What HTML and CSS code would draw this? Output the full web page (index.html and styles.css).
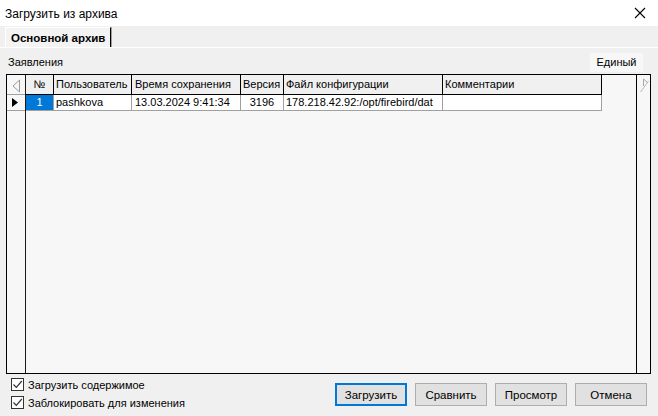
FILE: index.html
```html
<!DOCTYPE html>
<html lang="ru">
<head>
    <meta charset="UTF-8">
    <title>Загрузить из архива</title>
    <link rel="stylesheet" href="styles.css">
</head>
<body>
    <div class="window">
        <div class="titlebar">
            <span class="title">Загрузить из архива</span>
            <svg class="close" width="12" height="12" viewBox="0 0 12 12">
                <path d="M1 1 L11 11 M11 1 L1 11" stroke="#000" stroke-width="1.1" fill="none"/>
            </svg>
        </div>

        <div class="tabs">
            <div class="tab active">Основной архив</div>
        </div>

        <div class="panel">
            <div class="panel-head">
                <span class="label">Заявления</span>
                <div class="flat-btn">Единый</div>
            </div>

            <div class="grid">
                <div class="indicator">
                    <div class="ind-head">
                        <svg width="10" height="14" viewBox="0 0 10 14">
                            <path d="M8.5 1 L2 7 L8.5 13" stroke="#9a9a9a" fill="none"/>
                            <path d="M8.5 1 L8.5 13" stroke="#9a9a9a"/>
                        </svg>
                    </div>
                    <div class="ind-row">
                        <svg width="6" height="9" viewBox="0 0 6 9">
                            <path d="M0 0 L6 4.5 L0 9 Z" fill="#000"/>
                        </svg>
                    </div>
                </div>

                <div class="main">
                    <div class="row head">
                        <div class="cell c-num center">№</div>
                        <div class="cell c-user">Пользователь</div>
                        <div class="cell c-time">Время сохранения</div>
                        <div class="cell c-ver">Версия</div>
                        <div class="cell c-file">Файл конфигурации</div>
                        <div class="cell c-note">Комментарии</div>
                    </div>
                    <div class="row data">
                        <div class="cell c-num center selected">1</div>
                        <div class="cell c-user">pashkova</div>
                        <div class="cell c-time">13.03.2024 9:41:34</div>
                        <div class="cell c-ver center">3196</div>
                        <div class="cell c-file">178.218.42.92:/opt/firebird/dat</div>
                        <div class="cell c-note"></div>
                    </div>
                </div>

                <div class="side">
                    <svg width="10" height="16" viewBox="0 0 10 16">
                        <path d="M4.5 1 L4.5 8" stroke="#a8a8a8"/>
                        <path d="M4.5 1 L9 5" stroke="#a8a8a8"/>
                        <path d="M1.5 14 L9.5 3" stroke="#b8b8b8"/>
                    </svg>
                </div>
            </div>

            <div class="footer">
                <div class="checks">
                    <label class="check">
                        <span class="box">
                            <svg width="11" height="11" viewBox="0 0 11 11">
                                <path d="M1.5 5.5 L4.3 8.3 L9.8 2" stroke="#333" stroke-width="1.2" fill="none"/>
                            </svg>
                        </span>
                        Загрузить содержимое
                    </label>
                    <label class="check">
                        <span class="box">
                            <svg width="11" height="11" viewBox="0 0 11 11">
                                <path d="M1.5 5.5 L4.3 8.3 L9.8 2" stroke="#333" stroke-width="1.2" fill="none"/>
                            </svg>
                        </span>
                        Заблокировать для изменения
                    </label>
                </div>
                <div class="buttons">
                    <button class="btn default">Загрузить</button>
                    <button class="btn">Сравнить</button>
                    <button class="btn">Просмотр</button>
                    <button class="btn">Отмена</button>
                </div>
            </div>
        </div>
    </div>
</body>
</html>
```

FILE: styles.css
```css
body {
    margin: 0;
    padding: 0;
    font-family: 'Liberation Sans', Arial, sans-serif;
    font-size: 11px;
    color: #000;
    background: #f0f0f0;
}
.window {
    width: 658px;
    height: 416px;
    display: flex;
    flex-direction: column;
    background: #f0f0f0;
    overflow: hidden;
}
.titlebar {
    height: 26px;
    background: #fff;
    display: flex;
    align-items: center;
    justify-content: space-between;
    padding: 0 12px 0 5px;
    flex-shrink: 0;
}
.title {
    font-size: 12px;
    padding-top: 1px;
}
.close {
    display: block;
}
.tabs {
    height: 21px;
    display: flex;
    padding-left: 5px;
    padding-top: 1px;
    box-sizing: border-box;
    flex-shrink: 0;
}
.tab {
    height: 20px;
    padding: 0 5px 0 5px;
    line-height: 20px;
    border-left: 1px solid #fff;
    border-top: 1px solid #fff;
    border-right: 1px solid #000;
    box-shadow: 1px 0 0 #a0a0a0;
    box-sizing: border-box;
    font-weight: bold;
    font-size: 11.5px;
    background: #f3f3f3;
}
.panel {
    flex: 1;
    display: flex;
    flex-direction: column;
    border-top: 1px solid #fff;
}
.panel-head {
    height: 26px;
    display: flex;
    align-items: center;
    justify-content: space-between;
    padding: 0 15px 0 8px;
}
.label {
    padding-top: 2px;
}
.flat-btn {
    width: 53px;
    height: 19px;
    line-height: 19px;
    text-align: center;
    margin-top: 3px;
    background: #f7f7f7;
}
.grid {
    margin: 0 7px 0 6px;
    height: 300px;
    box-sizing: border-box;
    border: 1px solid #000;
    background: #f7f7f7;
    display: flex;
}
.indicator {
    width: 19px;
    border-right: 1px solid #1a1a1a;
    box-sizing: border-box;
    display: flex;
    flex-direction: column;
}
.ind-head {
    height: 20px;
    box-sizing: border-box;
    border-bottom: 1px solid #a0a0a0;
    display: flex;
    align-items: center;
    padding-left: 4px;
    padding-top: 2px;
}
.ind-row {
    height: 16px;
    box-sizing: border-box;
    border-bottom: 1px solid #a0a0a0;
    display: flex;
    align-items: center;
    padding-left: 5px;
}
.main {
    flex: 1;
    display: flex;
    flex-direction: column;
}
.row {
    display: flex;
}
.cell {
    box-sizing: border-box;
    white-space: nowrap;
    overflow: hidden;
    padding: 0 2px;
    flex-shrink: 0;
}
.head .cell {
    height: 20px;
    line-height: 19px;
    background: #f0f0f0;
    border-right: 1px solid #000;
    border-bottom: 1px solid #000;
}
.data .cell {
    height: 16px;
    line-height: 15px;
    background: #fff;
    border-right: 1px solid #a0a0a0;
    border-bottom: 1px solid #a0a0a0;
}
.data .cell.selected {
    background: #0078d7;
    color: #fff;
}
.center {
    text-align: center;
}
.c-num { width: 28px; }
.c-user { width: 78px; }
.c-time { width: 109px; padding-left: 3px; }
.c-ver { width: 43px; }
.c-file { width: 159px; }
.c-note { width: 159px; }
.side {
    width: 14px;
    border-left: 1px solid #000;
    box-sizing: border-box;
    padding: 3px 0 0 2px;
}
.footer {
    flex: 1;
    display: flex;
    justify-content: space-between;
    padding: 4px 11px 0 11px;
}
.checks {
    display: flex;
    flex-direction: column;
    gap: 5px;
}
.check {
    display: flex;
    align-items: center;
    gap: 4px;
    height: 13px;
}
.box {
    width: 13px;
    height: 13px;
    box-sizing: border-box;
    border: 1px solid #333;
    background: #fff;
    display: flex;
    align-items: center;
    justify-content: center;
}
.box svg {
    display: block;
}
.buttons {
    display: flex;
    gap: 8px;
    padding-top: 5px;
}
.btn {
    width: 72px;
    height: 23px;
    font-family: 'Liberation Sans', Arial, sans-serif;
    font-size: 11.5px;
    color: #000;
    background: #e1e1e1;
    border: 1px solid #adadad;
    padding: 0;
}
.btn.default {
    border: 2px solid #0078d7;
}
```
